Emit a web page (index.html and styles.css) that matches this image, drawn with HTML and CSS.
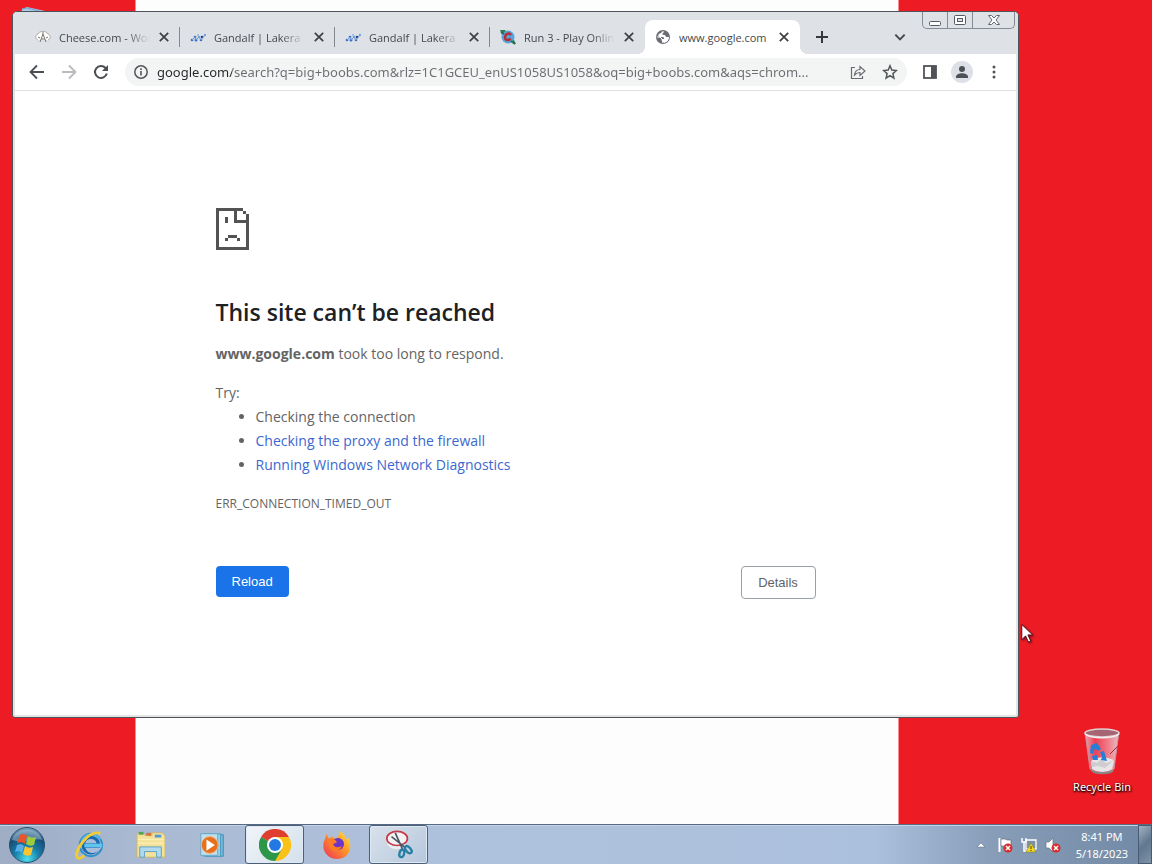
FILE: index.html
```html
<!DOCTYPE html>
<html lang="en">
<head>
<meta charset="utf-8">
<title>www.google.com</title>
<link rel="stylesheet" href="styles.css">
</head>
<body>
<main class="desktop">
  <svg class="hidden-item" viewBox="0 0 24 10" aria-hidden="true"><path d="M1 2l5-2 18 4v6H0z" fill="#a9c8e4"/><path d="M1 2l5-1 16 4" fill="none" stroke="#6fa3d0"/></svg>

  <section class="window">
    <header class="tab-strip">
      <div class="tabs">
        <div class="tab">
          <svg class="favicon" viewBox="0 0 16 16"><path d="M3 11C0 10 0 6 3 5c1-3 8-4 10 0 3 1 3 5 0 6" fill="#fff" stroke="#aaa9a2"/><path d="M5 13l3-8 3 8M6 10h4M3 8l2 1M11 9l2-1M8 5V3" fill="none" stroke="#77756b"/></svg>
          <span class="tab-title">Cheese.com - World</span>
          <button class="icon-button tab-close" aria-label="Close tab"><svg viewBox="0 0 10 10"><path d="M1.500 1.500l7 7M8.500 1.500l-7 7"/></svg></button>
        </div>
        <div class="tab">
          <svg class="favicon" viewBox="0 0 16 16"><g fill="#3b6fc4"><circle cx="2" cy="11" r="1.300"/><circle cx="6" cy="11" r="1.500"/><circle cx="11" cy="11" r="1.300"/><circle cx="5" cy="8" r="1.300"/><circle cx="9" cy="8" r="1.300" fill="#78a5df"/><circle cx="8" cy="6" r="1" fill="#8eb3e6"/><circle cx="12" cy="8" r="1.300" fill="#1f4486"/><circle cx="15" cy="6" r="1.200" fill="#78a5df"/></g><path d="M2 11l3-3 1 3 3-3 2 3 4-5" fill="none" stroke="#6f9ad8"/></svg>
          <span class="tab-title">Gandalf | Lakera</span>
          <button class="icon-button tab-close" aria-label="Close tab"><svg viewBox="0 0 10 10"><path d="M1.500 1.500l7 7M8.500 1.500l-7 7"/></svg></button>
        </div>
        <div class="tab">
          <svg class="favicon" viewBox="0 0 16 16"><g fill="#3b6fc4"><circle cx="2" cy="11" r="1.300"/><circle cx="6" cy="11" r="1.500"/><circle cx="11" cy="11" r="1.300"/><circle cx="5" cy="8" r="1.300"/><circle cx="9" cy="8" r="1.300" fill="#78a5df"/><circle cx="8" cy="6" r="1" fill="#8eb3e6"/><circle cx="12" cy="8" r="1.300" fill="#1f4486"/><circle cx="15" cy="6" r="1.200" fill="#78a5df"/></g><path d="M2 11l3-3 1 3 3-3 2 3 4-5" fill="none" stroke="#6f9ad8"/></svg>
          <span class="tab-title">Gandalf | Lakera</span>
          <button class="icon-button tab-close" aria-label="Close tab"><svg viewBox="0 0 10 10"><path d="M1.500 1.500l7 7M8.500 1.500l-7 7"/></svg></button>
        </div>
        <div class="tab tab-last">
          <svg class="favicon" viewBox="0 0 16 16"><path d="M0 1h5l9 10 2 4-3-1L2 6z" fill="#2d7d55"/><circle cx="8" cy="8" r="6.500" fill="#55a5dc"/><path d="M1 3l3 2M11 12l4 3" stroke="#26724b" stroke-width="2"/><path d="M11 6C9 3 5 5 5 8.500c0 3 4 3.500 5.500 1" fill="none" stroke="#b92d32" stroke-width="2.500"/></svg>
          <span class="tab-title">Run 3 - Play Online</span>
          <button class="icon-button tab-close" aria-label="Close tab"><svg viewBox="0 0 10 10"><path d="M1.500 1.500l7 7M8.500 1.500l-7 7"/></svg></button>
        </div>
        <div class="tab tab-active">
          <svg class="favicon" viewBox="0 0 16 16"><circle cx="8" cy="8" r="7" fill="#6b6f74"/><path d="M8 2c-2 1-1 2-3 2.500C3 5 3 7 4 8h4c1 0 1 1 1 2H7v2l2 2c4-1 5-4 5-6h-2c-2 0-1-2-3-2s-2-1-1-2 1-1 0-2z" fill="#fff"/><path d="M2 8h3l2 2v1c1 1 0 2 1 3" fill="none" stroke="#fff"/></svg>
          <span class="tab-title">www.google.com</span>
          <button class="icon-button tab-close" aria-label="Close tab"><svg viewBox="0 0 10 10"><path d="M1.500 1.500l7 7M8.500 1.500l-7 7"/></svg></button>
        </div>
      </div>
      <button class="icon-button new-tab" aria-label="New tab"><svg viewBox="0 0 14 14"><path d="M7 1v12M1 7h12" fill="none" stroke="#35383c" stroke-width="2"/></svg></button>
      <button class="icon-button tab-search" aria-label="Search tabs"><svg viewBox="0 0 12 12"><path d="M2 4l4 4 4-4" fill="none" stroke="#45494d" stroke-width="1.700"/></svg></button>
    </header>
    <div class="window-controls">
      <button class="control" aria-label="Minimize"><svg viewBox="0 0 14 14"><rect x="1.500" y="8.500" width="11" height="4" rx="1" fill="#fff" stroke="#555b65"/></svg></button>
      <button class="control" aria-label="Maximize"><svg viewBox="0 0 14 14"><rect x="1.500" y="2.500" width="11" height="9" rx="1" fill="#fff" stroke="#555b65"/><rect x="4.500" y="5.500" width="5" height="3" fill="#dfe3e9" stroke="#555b65"/></svg></button>
      <button class="control control-close" aria-label="Close"><svg viewBox="0 0 14 14"><path d="M1.500 2.500h3L7 5l2.500-2.500h3L9 7l3.500 4.500h-3L7 9l-2.500 2.500h-3L5 7z" fill="#fff" stroke="#626873"/></svg></button>
    </div>

    <nav class="toolbar">
      <button class="icon-button nav-button" aria-label="Back"><svg viewBox="0 0 16 16"><path d="M15 8H2M8 1.500L1.500 8 8 14.500" fill="none" stroke="#4b4f53" stroke-width="1.800"/></svg></button>
      <button class="icon-button nav-button" aria-label="Forward"><svg viewBox="0 0 16 16"><path d="M1 8h13M8 1.500L14.500 8 8 14.500" fill="none" stroke="#b9bbbe" stroke-width="1.800"/></svg></button>
      <button class="icon-button nav-button" aria-label="Reload page"><svg viewBox="0 0 16 16"><path d="M13.800 9.500A6 6 0 1 1 12.500 4L14 5.500" fill="none" stroke="#4b4f53" stroke-width="2"/><path d="M15 1v6H9z" fill="#4b4f53"/></svg></button>
      <div class="omnibox">
        <button class="icon-button" aria-label="Site information"><svg viewBox="0 0 16 16"><circle cx="8" cy="8" r="6.200" fill="none" stroke="#53575b" stroke-width="1.500"/><path d="M8 7v4.500M8 4.200V6" stroke="#53575b" stroke-width="1.600"/></svg></button>
        <input class="address" aria-label="Address" value="google.com/search?q=big+boobs.com&amp;rlz=1C1GCEU_enUS1058US1058&amp;oq=big+boobs.com&amp;aqs=chrom...">
        <button class="icon-button" aria-label="Share"><svg viewBox="0 0 16 16"><path d="M5 3.500H1.500v11h11V12M4.500 11C5 7 7 5.500 10 5.500V2.500L15 7l-5 4.500v-3c-3 0-4 1-5.500 2.500z" fill="none" stroke="#686c70" stroke-width="1.200"/></svg></button>
        <button class="icon-button" aria-label="Bookmark this page"><svg viewBox="0 0 16 16"><path d="M8 1.800l1.800 4.300 4.600.4-3.500 3.100 1 4.500L8 11.700l-3.900 2.400 1-4.500-3.500-3.100 4.600-.4z" fill="none" stroke="#53575b" stroke-width="1.500"/></svg></button>
      </div>
      <div class="toolbar-actions">
        <button class="icon-button" aria-label="Side panel"><svg viewBox="0 0 16 16"><rect x="2" y="2" width="12" height="12" fill="#fff" stroke="#505458" stroke-width="1.800"/><path d="M9 2h5v12H9z" fill="#505458"/></svg></button>
        <button class="icon-button avatar" aria-label="Profile"><svg viewBox="0 0 16 16"><circle cx="8" cy="5" r="3" fill="#4c5158"/><path d="M2 13c0-5 12-5 12 0v1H2z" fill="#4c5158"/></svg></button>
        <button class="icon-button" aria-label="Menu"><svg viewBox="0 0 16 16" fill="#505458"><circle cx="8" cy="3" r="1.500"/><circle cx="8" cy="8" r="1.500"/><circle cx="8" cy="13" r="1.500"/></svg></button>
      </div>
    </nav>

    <div class="viewport">
      <article class="error">
        <svg class="sad-page" viewBox="0 0 11 14" shape-rendering="crispEdges" fill="#535353"><path d="M0 0h9v1H7v3h4v1H6V1H1v12h9V2h1v12H0zM9 1h1v1H9zM3 3h1v2H3zM4 9h3v1H4zM3 10h1v1H3zM7 10h1v1H7z"/></svg>
        <h1>This site can’t be reached</h1>
        <p class="summary"><strong>www.google.com</strong> took too long to respond.</p>
        <p class="try">Try:</p>
        <ul class="suggestions">
          <li>Checking the connection</li>
          <li><a href="#proxy">Checking the proxy and the firewall</a></li>
          <li><a href="#diagnostics">Running Windows Network Diagnostics</a></li>
        </ul>
        <p class="error-code">ERR_CONNECTION_TIMED_OUT</p>
        <div class="actions">
          <button class="reload">Reload</button>
          <button class="details">Details</button>
        </div>
      </article>
    </div>
  </section>

  <div class="recycle-bin">
    <svg viewBox="0 0 40 48" aria-hidden="true">
      <defs><linearGradient id="glass" x2="1"><stop stop-color="#e9a7b2"/><stop offset=".3" stop-color="#ee3f50"/><stop offset=".7" stop-color="#f0808c"/><stop offset="1" stop-color="#e4c0c8"/></linearGradient></defs>
      <path d="M3 5h34l-5 37c-4 5-20 5-24 0z" fill="url(#glass)" stroke="#c5919c"/>
      <path d="M9 34c6-5 18-5 23 0l-2 8c-4 4-16 4-20 0z" fill="#e7e5e6"/>
      <path d="M9 34l6 2 4-4 5 4 7-2-8 7-7-2-6 1z" fill="#cfcdd1"/>
      <path d="M9 18l6-2 4 6-3 2-3-3-2 6-3-1zM10 29l5-1 1 5h-5zM18 25l4-1 3 10-6-1 1-3z" fill="#237fd8"/>
      <path d="M9 42c4 4 18 4 23 0l-1 3c-4 3-17 3-21 0z" fill="#8b8585"/>
      <ellipse cx="20" cy="6" rx="17" ry="4" fill="#a56573" stroke="#ddd0d3" stroke-width="1.500"/>
      <path d="M3 7c6 5 28 5 34 0" fill="none" stroke="#f5eef0" stroke-width="1.500"/>
      <path d="M28 27l8-8" stroke="#a52d3a"/>
    </svg>
    <span>Recycle Bin</span>
  </div>

  <svg class="pointer" viewBox="0 0 12 20" aria-hidden="true"><path d="M.5.5v16l4-4 3 6.500 2.500-1-3-6.500h5z" fill="#fff" stroke="#5a0a18"/></svg>
</main>

<footer class="taskbar">
  <button class="start" aria-label="Start"><svg viewBox="0 0 38 38">
    <defs><radialGradient id="orb" cx=".5" cy=".9" r=".9"><stop stop-color="#4fe0ed"/><stop offset=".4" stop-color="#187fa9"/><stop offset=".75" stop-color="#174d77"/><stop offset="1" stop-color="#7fa9c4"/></radialGradient></defs>
    <circle cx="19" cy="19" r="17.500" fill="url(#orb)" stroke="#294f6e"/><path d="M4 14C8 0 30 0 34 14c-8-3-16 4-30 0z" fill="#cfe2ee" opacity=".4"/>
    <path d="M12 9c3-2 5-1 7 1l-2 8c-2-2-5-2-8-1z" fill="#e9552a"/><path d="M20 10c3 2 5 2 8 1l-2 8c-3 1-5 1-8-1z" fill="#9ccc3c"/><path d="M9 19c3-1 5-1 7 1l-2 7c-2-2-4-2-7-1z" fill="#55aee8"/><path d="M17 20c3 2 5 2 8 1l-2 8c-3 1-5 1-8-1z" fill="#fbc531"/>
  </svg></button>
  <div class="task-list">
    <button class="task" aria-label="Internet Explorer"><svg viewBox="0 0 32 32">
      <circle cx="18" cy="16" r="10" fill="#176bb1"/><circle cx="18" cy="16" r="12" fill="none" stroke="#2b8fcc" stroke-width="2"/><path d="M12 14c1-6 11-6 12 0zM12 19h17c-5 8-15 7-17 0z" fill="#a9bdd9"/><path d="M11 16.500h19" stroke="#5fc4ee" stroke-width="4"/><path d="M8 12c3-9 16-10 20-2" fill="none" stroke="#52b4e6" stroke-width="2"/><path d="M28 4C17-1 1 20 3 28c1 4 5 2 8-1" fill="none" stroke="#f3cb35" stroke-width="3"/>
    </svg></button>
    <button class="task" aria-label="Windows Explorer"><svg viewBox="0 0 32 32">
      <path d="M1 4h7l2 2h7V3h11l3 3v23H1z" fill="#f4e29a" stroke="#cbb56c"/><path d="M3 2h5v3H3z" fill="#4ca64c"/><path d="M11 3h5v3h-5z" fill="#da713a"/><path d="M20 5h7v3h-7z" fill="#539bd2"/><path d="M2 10h28M2 14h28" stroke="#fff3bd"/><path d="M4 29V18h23v11h-5v-6H9v6z" fill="#b0dbef" stroke="#5c9fc4"/>
    </svg></button>
    <button class="task" aria-label="Windows Media Player"><svg viewBox="0 0 32 32">
      <path d="M9 5h18v23H9z" fill="#72b8db" stroke="#448bb4"/><path d="M6 4h18v24H6z" fill="#9ad0e6" stroke="#4e9bc0"/><path d="M3 4h18v23H3z" fill="#bfe1ed" stroke="#65a6c4"/><circle cx="12.500" cy="16" r="9" fill="#e86f1c" stroke="#f5b68c"/><path d="M9 10l9 6-9 6z" fill="#fff"/>
    </svg></button>
    <button class="task task-open task-current" aria-label="Google Chrome"><svg viewBox="0 0 32 32">
      <path d="M16 16L2.100 8A16 16 0 0 1 29.900 8z" fill="#df3d2e"/><path d="M16 16L29.900 8A16 16 0 0 1 16 32z" fill="#fbc116"/><path d="M16 16l7 4-7 12A16 16 0 0 1 2.100 8z" fill="#2d9649"/><path d="M16 8h14l-7 12z" fill="#fbc116"/><circle cx="16" cy="16" r="8" fill="#fff"/><circle cx="16" cy="16" r="6" fill="#2378e3"/>
    </svg></button>
    <button class="task" aria-label="Firefox"><svg viewBox="0 0 32 32">
      <defs><linearGradient id="fire" x1="1" x2="0" y2="1"><stop stop-color="#fff04d"/><stop offset=".4" stop-color="#ff9a24"/><stop offset="1" stop-color="#ef3059"/></linearGradient></defs>
      <path d="M5 4l2 5 4-2 2 2 4-1 2-7c5 3 6 6 7 9l2-2c6 13-1 23-12 23S-2 20 3 10z" fill="url(#fire)"/><circle cx="17" cy="15" r="6.500" fill="#6c35c9"/><path d="M7 11c4-3 8 0 9 2l-4 2c1 4 5 4 9 2-2 7-11 7-13 1z" fill="#ff7d22"/>
    </svg></button>
    <button class="task task-open" aria-label="Snipping Tool"><svg viewBox="0 0 32 32">
      <ellipse cx="13" cy="12" rx="11" ry="9" fill="#e9eef3" stroke="#c9d0d8"/><ellipse cx="14" cy="9" rx="11" ry="7.500" fill="#f5f2f4" stroke="#c63947" stroke-width="1.800"/><path d="M12 3l8 18M8 7l15 12" stroke="#4c5863" stroke-width="1.800"/><ellipse cx="19" cy="25" rx="2.500" ry="4" transform="rotate(15 19 25)" fill="none" stroke="#287fa5" stroke-width="2.500"/><ellipse cx="26" cy="21" rx="2.500" ry="4.500" transform="rotate(-40 26 21)" fill="none" stroke="#287fa5" stroke-width="2.500"/>
    </svg></button>
  </div>
  <div class="tray">
    <button class="tray-icon" aria-label="Show hidden icons"><svg viewBox="0 0 16 16"><path d="M4 10l4-4 4 4z" fill="#fff" stroke="#596d86" stroke-width=".5"/></svg></button>
    <button class="tray-icon" aria-label="Action Center"><svg viewBox="0 0 16 16"><path d="M2.500 1v14" stroke="#fff" stroke-width="2"/><path d="M4 2h4l2 1h4v7H9L7 9H4z" fill="#fff" stroke="#55606e" stroke-width=".6"/><circle cx="11" cy="11" r="4.500" fill="#d82c2c"/><path d="M9 9l4 4M13 9l-4 4" stroke="#fff" stroke-width="1.500"/></svg></button>
    <button class="tray-icon" aria-label="Network"><svg viewBox="0 0 16 16"><path d="M5 3h10v9H5z" fill="#7c91a8" stroke="#fff" stroke-width="1.300"/><path d="M1 1v4h4V1M3 5v9h5" fill="none" stroke="#fff" stroke-width="1.500"/><path d="M10 6l5 9H5z" fill="#f4db22" stroke="#8e811b" stroke-width=".6"/><path d="M10 9v3M10 13v1" stroke="#5d5210" stroke-width="1.200"/></svg></button>
    <button class="tray-icon" aria-label="Volume"><svg viewBox="0 0 16 16"><path d="M1 5h3l4-4v14l-4-4H1z" fill="#fff" stroke="#647184" stroke-width=".7"/><circle cx="11" cy="11" r="4.500" fill="#d82c2c"/><path d="M9 9l4 4M13 9l-4 4" stroke="#fff" stroke-width="1.500"/></svg></button>
    <div class="clock"><span>8:41 PM</span><span>5/18/2023</span></div>
  </div>
  <button class="show-desktop" aria-label="Show desktop"></button>
</footer>
</body>
</html>
```
FILE: styles.css
```css
* { box-sizing: border-box; }
body {
  margin: 0;
  min-height: 100vh;
  display: flex;
  flex-direction: column;
  font-family: "Open Sans", "Noto Sans", sans-serif;
  overflow: hidden;
}
button { padding: 0; border: 0; background: none; font: inherit; color: inherit; }
svg { display: block; }

.desktop {
  position: relative;
  flex: 1;
  background: linear-gradient(90deg, #ed1c24 135px, #fdfdfe 136px, #fdfdfe calc(100% - 254px), #ed1c24 calc(100% - 253px));
}
.hidden-item { position: absolute; left: 21px; top: 7px; width: 24px; height: 10px; }

.window {
  position: absolute;
  inset: 11px 133px 106px 12px;
  display: flex;
  flex-direction: column;
  background: #fff;
  border: 1px solid #4d5358;
  border-radius: 5px 5px 3px 3px;
  box-shadow: inset 0 0 0 2px #e3e4e5;
}
.tab-strip {
  display: flex;
  align-items: flex-end;
  height: 42px;
  padding: 0 16px 0 12px;
  background: #dee1e6;
  border-radius: 4px 4px 0 0;
}
.tabs { display: flex; }
.tab {
  position: relative;
  display: flex;
  align-items: center;
  gap: 8px;
  width: 155px;
  height: 34px;
  padding: 0 10px;
  color: #45494d;
  font-size: 11px;
}
.tab::after {
  content: "";
  position: absolute;
  right: 0;
  top: 7px;
  width: 1px;
  height: 20px;
  background: #85898e;
}
.tab-last::after { display: none; }
.tab-active { background: #fff; border-radius: 8px 8px 0 0; }
.tab-active::before, .tab-active::after {
  content: "";
  position: absolute;
  top: auto;
  bottom: 0;
  width: 8px;
  height: 8px;
}
.tab-active::before { left: -8px; background: radial-gradient(circle at 0 0, transparent 8px, #fff 8px); }
.tab-active::after { right: -8px; background: radial-gradient(circle at 100% 0, transparent 8px, #fff 8px); }
.favicon { flex: none; width: 16px; height: 16px; }
.tab-title {
  flex: 1;
  min-width: 0;
  overflow: hidden;
  white-space: nowrap;
  mask-image: linear-gradient(90deg, #000 calc(100% - 24px), transparent);
}
.tab-active .tab-title { mask-image: none; }
.icon-button { flex: none; display: flex; align-items: center; justify-content: center; }
.icon-button svg { width: 16px; height: 16px; }
.tab-close svg { width: 12px; height: 12px; fill: none; stroke: #3c4043; stroke-width: 1.4; }
.new-tab { width: 28px; height: 34px; margin-left: 8px; }
.new-tab svg { width: 14px; height: 14px; }
.tab-search { width: 28px; height: 34px; margin-left: auto; margin-right: 88px; }
.tab-search svg { width: 14px; height: 14px; }

.window-controls {
  position: absolute;
  top: 0;
  right: 3px;
  display: flex;
  border: 1px solid #858b94;
  border-top: 0;
  border-radius: 0 0 5px 5px;
}
.control { display: flex; justify-content: center; align-items: center; width: 25px; height: 16px; border-right: 1px solid #858b94; }
.control svg { width: 14px; height: 14px; }
.control-close { width: 41px; border-right: 0; }

.toolbar {
  display: flex;
  align-items: center;
  height: 37px;
  margin: 0 2px;
  padding: 0 14px 0 8px;
  border-bottom: 1px solid #dfe0e2;
}
.nav-button { width: 28px; height: 28px; margin-right: 4px; }
.omnibox {
  flex: 1;
  min-width: 0;
  display: flex;
  align-items: center;
  gap: 16px;
  height: 28px;
  margin-left: 6px;
  padding: 0 9px 0 8px;
  background: #f3f4f4;
  border-radius: 14px;
}
.address {
  flex: 1;
  min-width: 0;
  height: 24px;
  margin-left: -8px;
  padding: 0;
  border: 0;
  outline: 0;
  font: 13px/24px "Noto Sans", "Open Sans", sans-serif;
  color: transparent;
  background: linear-gradient(90deg, #25282b 75px, #6a6e72 75px);
  background-clip: text;
}
.toolbar-actions { display: flex; align-items: center; gap: 13px; margin-left: 15px; }
.toolbar-actions .avatar { width: 22px; height: 22px; border-radius: 50%; background: #dde0e6; }

.viewport { flex: 1; padding: 117px 24px 0; }
.error { max-width: 600px; margin: 0 auto; color: #646464; font-size: 14px; line-height: 24px; }
.sad-page { width: 33px; height: 42px; }
h1 { margin: 47px 0 0; color: #202124; font-size: 23px; font-weight: 600; line-height: 30px; }
p { margin: 0; }
.summary { margin-top: 15px; }
.try { margin-top: 15px; }
.suggestions { margin: 0; padding: 0 0 0 40px; }
a { color: #3b68cf; text-decoration: none; }
.error-code { margin-top: 15px; font-size: 12px; }
.actions { display: flex; justify-content: space-between; align-items: flex-start; margin-top: 50px; font: 13px/15px "Liberation Sans", Arial, sans-serif; }
.reload { padding: 8px 16px; border-radius: 4px; background: #1a73e8; color: #fff; }
.details { min-width: 75px; padding: 8px 16px; border: 1px solid #9aa0a6; border-radius: 4px; color: #5f6368; }

.recycle-bin {
  position: absolute;
  right: 14px;
  bottom: 29px;
  display: flex;
  flex-direction: column;
  align-items: center;
  gap: 4px;
  width: 72px;
  color: #fff;
  font: 11px/16px "Noto Sans", "Open Sans", sans-serif;
  white-space: nowrap;
  text-shadow: 1px 1px 2px #000, 0 1px 2px #000;
}
.recycle-bin svg { width: 40px; height: 48px; }
.pointer { position: absolute; right: 119px; bottom: 181px; width: 12px; height: 19px; filter: drop-shadow(1px 1px 1px #700d18); }

.taskbar {
  display: flex;
  align-items: stretch;
  height: 40px;
  border-top: 1px solid #566a84;
  box-shadow: inset 0 1px #c6d3e5;
  background: linear-gradient(90deg, #9eadc4, #a9b9d2 12%, #afc2dd 40%, #abc0dc 76%, #879db8 86%, #7289a5);
}
.start { width: 54px; display: flex; align-items: center; justify-content: center; }
.start svg { width: 38px; height: 38px; }
.task-list { display: flex; gap: 3px; margin-left: 5px; }
.task { display: flex; align-items: center; justify-content: center; width: 59px; border-radius: 3px; }
.task svg { width: 30px; height: 30px; }
.task-open { border: 1px solid #4d6078; background: linear-gradient(135deg, #d9e2ec, #b5c7dc); box-shadow: inset 0 0 0 1px #dfe9f3; }
.task-current { background: linear-gradient(135deg, #f1f5f8, #d3e0ed); }
.task-current svg { width: 32px; height: 32px; }
.tray { display: flex; align-items: center; gap: 8px; margin-left: auto; color: #fff; font: 11px/17px "Noto Sans", "Open Sans", sans-serif; }
.tray-icon svg { width: 16px; height: 16px; }
.clock { display: flex; flex-direction: column; align-items: center; margin-left: 7px; white-space: nowrap; }
.show-desktop { width: 14px; margin-left: 10px; border: 1px solid #475b72; background: linear-gradient(135deg, #a0b1c3, #61778e 50%, #7e93a8); }
```
